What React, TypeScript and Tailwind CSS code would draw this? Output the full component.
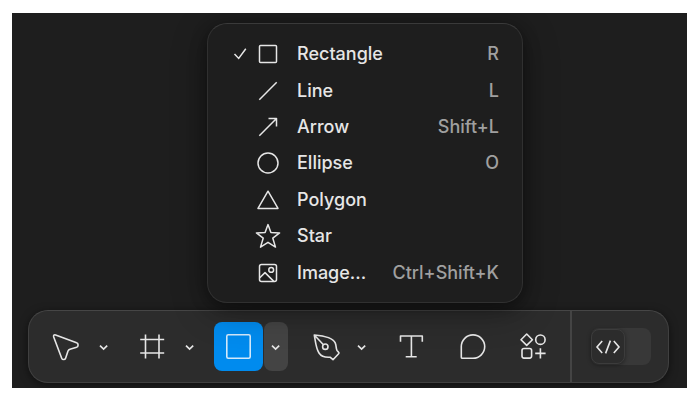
import { useState, type ReactNode } from "react";

type Shape = { name: string; shortcut?: string; icon: ReactNode };

const shapes: Shape[] = [
  { name: "Rectangle", shortcut: "R", icon: <rect x="3.5" y="3.5" width="17" height="17" rx="1" /> },
  { name: "Line", shortcut: "L", icon: <path d="M3.3 20.7l17.4-17.4" /> },
  { name: "Arrow", shortcut: "Shift+L", icon: <path d="M3.3 20.7L20.5 3.5M12.5 3.5h8v8" /> },
  { name: "Ellipse", shortcut: "O", icon: <circle cx="12" cy="12" r="10" /> },
  { name: "Polygon", icon: <path d="M12 3.2L22 20.4H2z" /> },
  {
    name: "Star",
    icon: (
      <path d="M12 .6l2.9 7.9 8.7.4-6.8 5.3 2.7 8.9L12 18.3l-7.5 4.8 2.7-8.9L.4 8.9l8.7-.4z" />
    ),
  },
  {
    name: "Image...",
    shortcut: "Ctrl+Shift+K",
    icon: (
      <>
        <rect x="3.5" y="3.5" width="17" height="17" rx="2" />
        <circle cx="15.2" cy="8.9" r="2.4" />
        <path d="M3.8 16.8l5.2-5.2 8.8 8.8" />
      </>
    ),
  },
];

function ToolIcon({ children }: { children: ReactNode }) {
  return (
    <svg
      className="size-[33px]"
      viewBox="0 0 33 33"
      fill="none"
      stroke="currentColor"
      strokeWidth="1.6"
      strokeLinejoin="round"
      aria-hidden="true"
    >
      {children}
    </svg>
  );
}

function Tool({ label, active = false, children }: { label: string; active?: boolean; children: ReactNode }) {
  return (
    <button
      type="button"
      aria-label={label}
      aria-pressed={active}
      className={
        active
          ? "flex size-[49px] items-center justify-center rounded-lg bg-[#008bee] text-[#d3e9fb]"
          : "flex size-[49px] items-center justify-center rounded-lg"
      }
    >
      <ToolIcon>{children}</ToolIcon>
    </button>
  );
}

function ToolGroup({ label, active = false, children }: { label: string; active?: boolean; children: ReactNode }) {
  return (
    <div className="flex gap-px">
      <Tool label={label} active={active}>
        {children}
      </Tool>
      <button
        type="button"
        aria-label={`${label} options`}
        className={
          active
            ? "flex h-[49px] w-6 items-center justify-center rounded-lg bg-[#444444]"
            : "flex h-[49px] w-6 items-center justify-center rounded-lg"
        }
      >
        <svg className="h-2 w-3" viewBox="0 0 12 8" fill="none" stroke="currentColor" strokeWidth="1.7" aria-hidden="true">
          <path d="M2 2.6L5.6 6l3.6-3.4" />
        </svg>
      </button>
    </div>
  );
}

export default function App() {
  const [selected, setSelected] = useState("Rectangle");
  const [devMode, setDevMode] = useState(false);

  return (
    <div className="bg-white px-3 py-[13px] font-['Inter','Liberation_Sans',sans-serif]">
      <main className="mr-px overflow-hidden bg-[#1e1e1e] pt-[10px] pr-[18px] pb-[5px] pl-4 text-[#e6e6e6]">
        <div
          role="menu"
          aria-label="Shapes"
          className="relative z-10 ml-[179px] grid h-[280px] w-[316px] grid-rows-7 rounded-[20px] border border-[#303030] border-t-[#3a3a3a] bg-[#1e1e1e] pt-3 pb-[11px] shadow-[0_4px_16px_rgba(0,0,0,0.4),0_8px_36px_rgba(0,0,0,0.3)]"
        >
          {shapes.map((shape) => (
            <button
              key={shape.name}
              type="button"
              role="menuitemradio"
              aria-checked={selected === shape.name}
              onClick={() => setSelected(shape.name)}
              className="flex items-center pr-[23px] pl-6 text-lg"
            >
              <svg className="mr-2 size-4" viewBox="0 0 16 16" fill="none" stroke="currentColor" strokeWidth="1.5" aria-hidden="true">
                {selected === shape.name && <path d="M2.5 8l4.2 4.4L13.8 2.8" />}
              </svg>
              <svg
                className="mr-[17px] size-6 overflow-visible"
                viewBox="0 0 24 24"
                fill="none"
                stroke="currentColor"
                strokeWidth="1.5"
                strokeLinejoin="round"
                aria-hidden="true"
              >
                {shape.icon}
              </svg>
              <span className="font-medium">{shape.name}</span>
              {shape.shortcut && <span className="ml-auto font-medium text-[#a0a0a0]">{shape.shortcut}</span>}
            </button>
          ))}
        </div>

        <div
          role="toolbar"
          aria-label="Tools"
          className="mt-[7px] flex h-[73px] rounded-[20px] border border-[#404040] border-t-[#464646] bg-[#2c2c2c] shadow-[0_2px_8px_rgba(0,0,0,0.5)]"
        >
          <div className="flex items-center gap-3 border-r-2 border-[#444444] px-[13px]">
            <ToolGroup label="Move">
              <path d="M5.6 4.9L26.6 12.8C28.6 13.5 28.6 16.6 26.6 17.3L20 19.2Q18.6 19.7 18 21L15.6 28.2C15 30 12.4 30 11.7 28.2L3.7 7C3.2 5.4 4.2 4.4 5.6 4.9z" />
            </ToolGroup>
            <ToolGroup label="Frame">
              <path d="M9.5 4.5v24M23 4.5v24M4.2 9.5h24M4.2 23h24" />
            </ToolGroup>
            <ToolGroup label="Rectangle" active>
              <rect x="4.8" y="4.8" width="23.4" height="23.4" rx="1.5" />
            </ToolGroup>
            <ToolGroup label="Pen">
              <path d="M6.3 5C13.5 5.6 24.4 6.9 27.2 12.8C28.6 15.8 27.8 18.8 29 20.4L30.8 22.5Q31.2 23.2 30.6 23.8L25 29.7L22 27.2C17.6 27.5 13.6 27 11 23C7.9 18.2 7.6 12 6.3 5zL15.4 14.8" />
              <circle cx="17.3" cy="16.7" r="2.7" />
            </ToolGroup>
            <Tool label="Text">
              <path d="M6.5 11.7V6h21.8v5.7M17.4 6v20.8M11.7 26.8h11" />
            </Tool>
            <Tool label="Comment">
              <path d="M18 4.9A11.7 11.7 0 0 1 18 28.3H7.4Q6.3 28.3 6.3 27.2V16.6A11.7 11.7 0 0 1 18 4.9z" />
            </Tool>
            <Tool label="Actions">
              <path d="M10.7 4l5.7 5.7-5.7 5.7L5 9.7z" />
              <circle cx="24.4" cy="9.7" r="4.7" />
              <rect x="6" y="18.5" width="9.6" height="9.6" rx="2" />
              <path d="M24.4 18.2v10.4M19.2 23.4h10.4" />
            </Tool>
          </div>

          <div className="flex grow items-center justify-end pr-[17px]">
            <label className="flex h-[37px] w-[60px] items-center rounded-lg bg-[#383838]">
              <input
                type="checkbox"
                role="switch"
                aria-label="Dev Mode"
                className="sr-only"
                checked={devMode}
                onChange={(event) => setDevMode(event.target.checked)}
              />
              <span
                className={
                  devMode
                    ? "ml-auto flex h-[35px] w-[34px] items-center justify-center rounded-lg border border-[#3c3c3c] bg-[#2c2c2c] shadow-[0_1px_4px_rgba(0,0,0,0.4)]"
                    : "flex h-[35px] w-[34px] items-center justify-center rounded-lg border border-[#3c3c3c] bg-[#2c2c2c] shadow-[0_1px_4px_rgba(0,0,0,0.4)]"
                }
              >
                <svg className="h-4 w-[26px]" viewBox="0 0 26 16" fill="none" stroke="currentColor" strokeWidth="1.6" aria-hidden="true">
                  <path d="M7.2 2L2 8l5.2 6M18.8 2L24 8l-5.2 6M15.4 1.6L10.6 14.4" />
                </svg>
              </span>
            </label>
          </div>
        </div>
      </main>
    </div>
  );
}
